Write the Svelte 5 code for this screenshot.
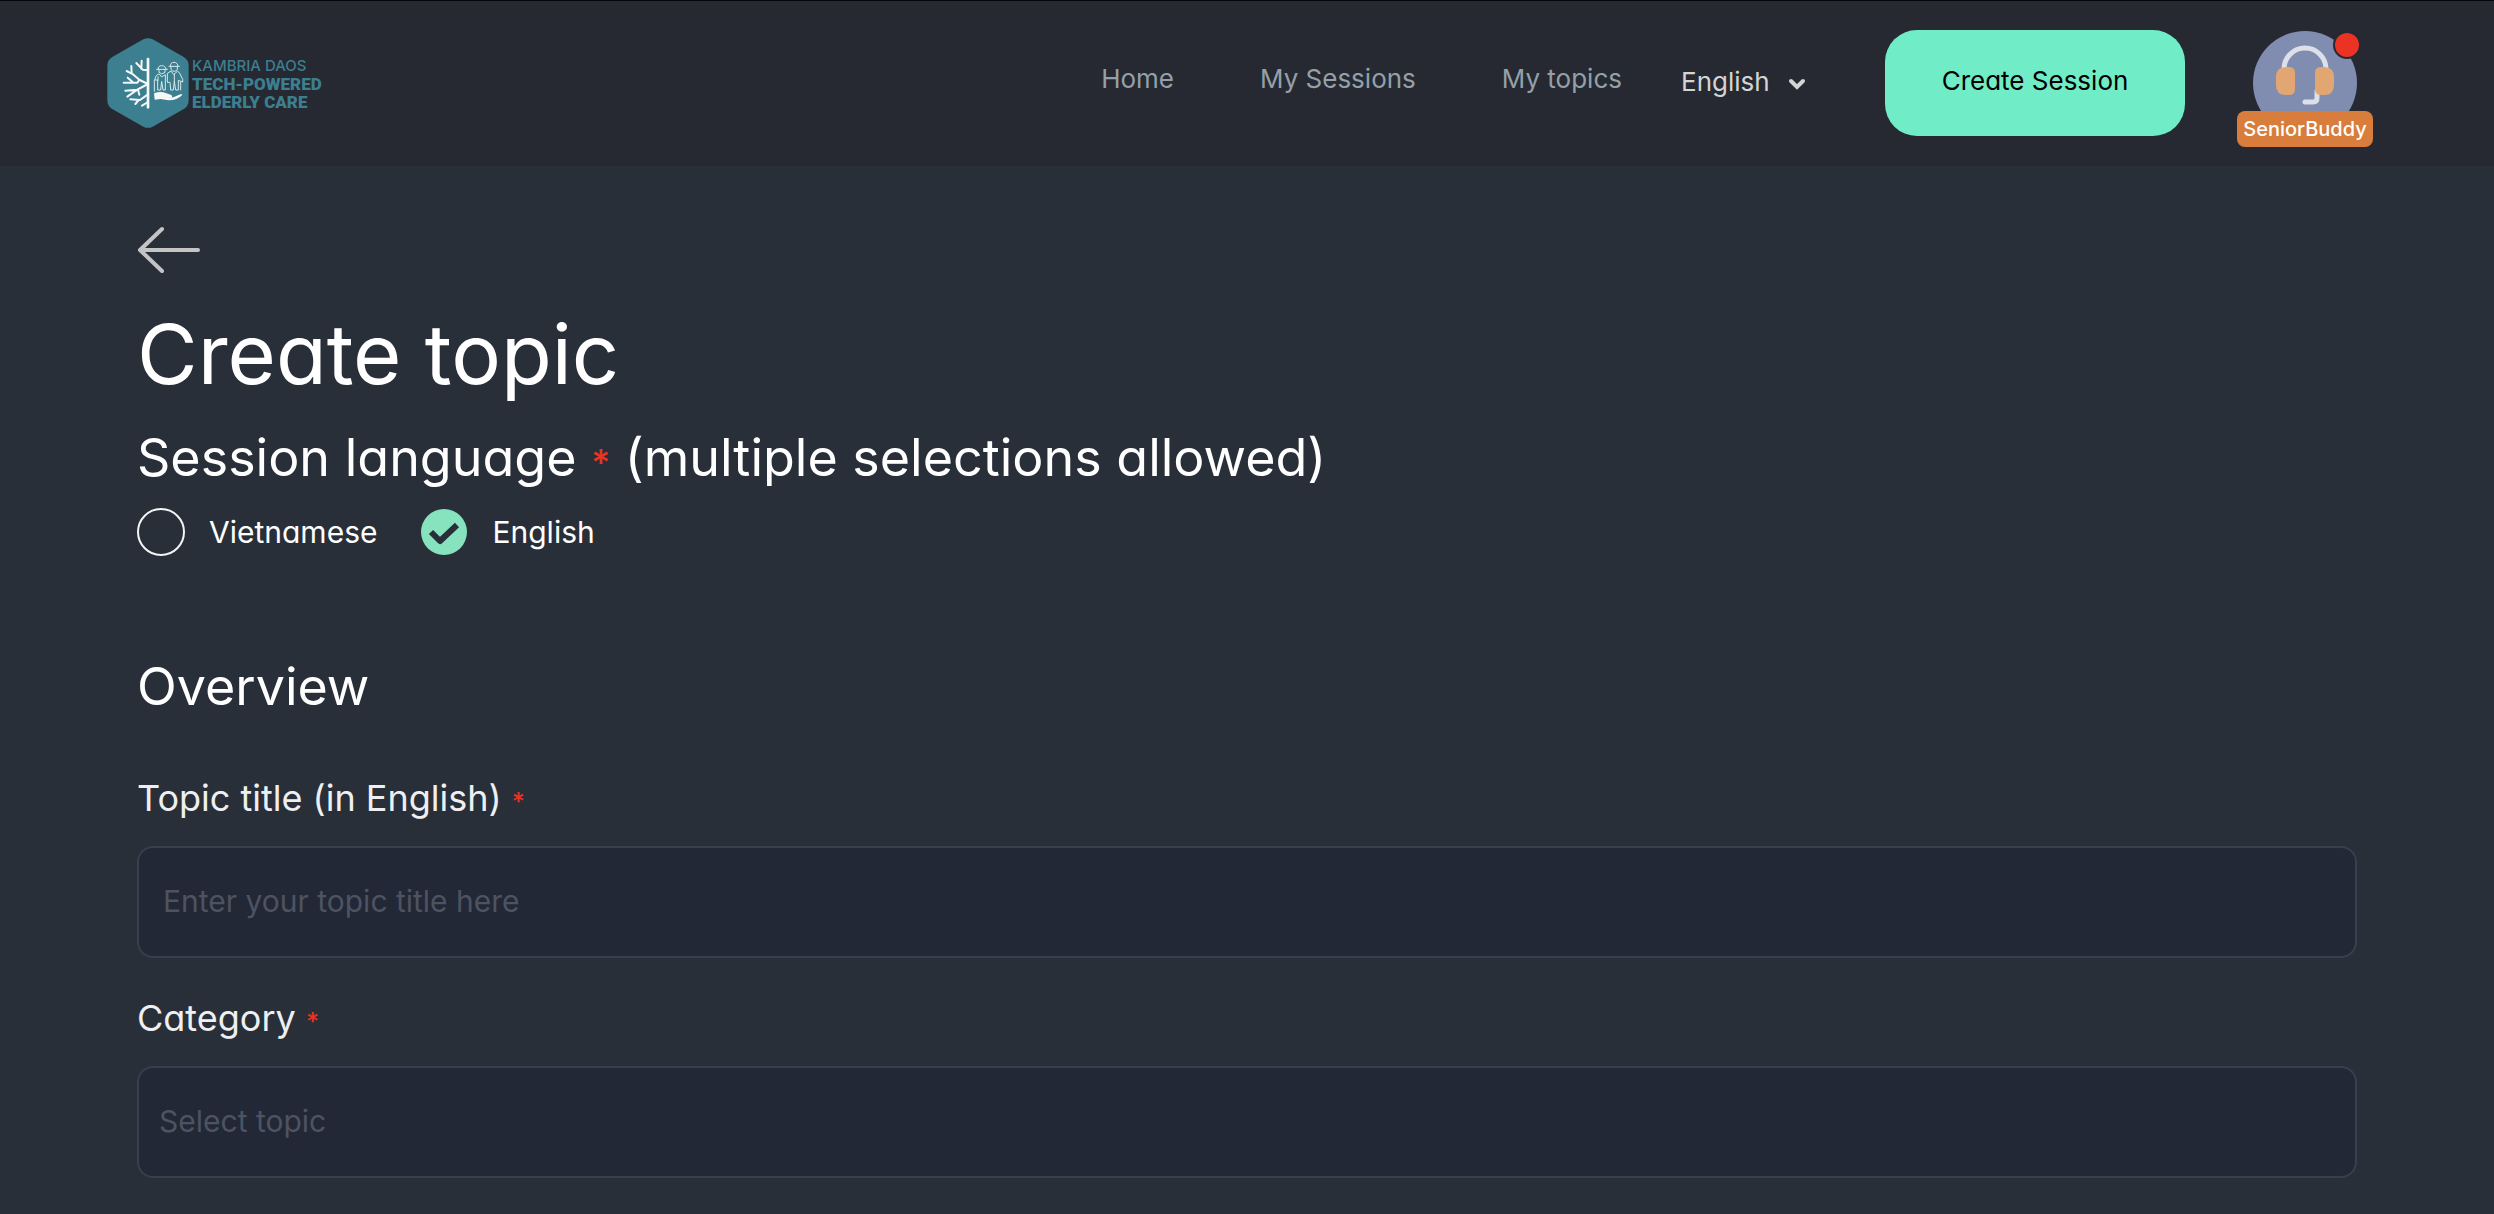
<script>
  const links = ['Home', 'My Sessions', 'My topics'];

  let languages = [
    { name: 'Vietnamese', checked: false },
    { name: 'English', checked: true }
  ];
  let locale = 'English';
  let title = '';
  let category = '';
</script>

<header class="header">
  <a class="logo" href="/">
    <svg class="logo-mark" viewBox="52 54 244 270" aria-hidden="true">
      <path
        d="M160 58Q174 51 188 58L280 110Q296 119 296 137V241Q296 259 280 268L188 320Q174 327 160 320L68 268Q52 259 52 241V137Q52 119 68 110Z"
        fill="#3c7f90"
      />
      <g fill="none" stroke="#f4f8f9" stroke-linecap="round" stroke-linejoin="round">
        <path d="M174 117V262" stroke-width="8" />
        <path
          d="M174 151L158 149L139 129M154 146L155 122M174 192L149 180L125 160L124 138M125 161L110 153M148 180L142 188L101 188M128 186L113 173M174 192L142 209L106 212M142 209L112 230M144 209L148 224M174 223L150 240L121 238M146 240L136 252M174 246L156 257"
          stroke-width="6"
        />
        <g stroke-width="3" stroke="#dbe8eb">
          <path d="M204 148Q204 137 215 137Q227 137 228 148M200 148H232M207 149V157Q215 166 225 157V149" />
          <path d="M241 139Q241 127 252 127Q263 127 264 139M237 139H268M243 141V149Q252 159 262 149V141" />
          <path d="M206 162Q195 166 195 180H203V210H212L215 184L219 210H226V164L216 170ZM193 180V214M204 170V181" />
          <path d="M242 154L232 160V187H240L242 210H250L253 184L257 210H265V181L278 186V178L268 158L262 154L252 163ZM272 186V210M253 163V184" />
        </g>
      </g>
      <path
        d="M192 220Q212 212 229 220L244 225Q250 231 242 233L226 232Q242 235 252 231L271 223Q279 221 276 226Q260 242 235 241L212 237L194 239Z"
        fill="#f4f8f9"
      />
    </svg>
    <span class="logo-text">
      <span>KAMBRIA DAOS</span>
      <strong>TECH-POWERED</strong>
      <strong>ELDERLY CARE</strong>
    </span>
  </a>

  <nav class="nav">
    {#each links as link}
      <a href="/">{link}</a>
    {/each}
  </nav>

  <div class="locale">
    <select aria-label="Site language" bind:value={locale}>
      <option>English</option>
      <option>Vietnamese</option>
    </select>
    <svg viewBox="0 0 18 12" aria-hidden="true">
      <path d="M3 3L9 9L15 3" fill="none" stroke="#d4d4d4" stroke-width="4" stroke-linecap="round" />
    </svg>
  </div>

  <button class="create" type="button">Create Session</button>

  <button class="avatar" type="button">
    <svg viewBox="0 0 104 104" aria-hidden="true">
      <circle cx="52" cy="52" r="52" fill="#808db0" />
      <path d="M31 40V38A21 21 0 0 1 73 38V40" fill="none" stroke="#dce0e9" stroke-width="5" />
      <path d="M64 60V67Q64 71 60 71H52" fill="none" stroke="#dce0e9" stroke-width="5" stroke-linecap="round" />
      <path d="M33 36H36Q42 36 42 42V58Q42 64 36 64H33Q23 64 23 54V46Q23 36 33 36Z" fill="#e2a673" />
      <path d="M71 36H68Q62 36 62 42V58Q62 64 68 64H71Q81 64 81 54V46Q81 36 71 36Z" fill="#e2a673" />
    </svg>
    <span class="dot"></span>
    <span class="badge">SeniorBuddy</span>
  </button>
</header>

<main class="main">
  <a class="back" href="/" aria-label="Back">
    <svg viewBox="0 0 64 48" aria-hidden="true">
      <path d="M25 3L3 24L25 45M3 24H61" fill="none" stroke="#c4c4c6" stroke-width="4" stroke-linecap="round" stroke-linejoin="round" />
    </svg>
  </a>

  <h1>Create topic</h1>

  <form>
    <fieldset>
      <legend>Session language <span class="required">*</span> (multiple selections allowed)</legend>
      <div class="choices">
        {#each languages as language}
          <label class="choice">
            <span class="box">
              <input type="checkbox" bind:checked={language.checked} />
              <svg viewBox="0 0 48 48" aria-hidden="true">
                <circle cx="24" cy="24" r="23" fill="#86e3bd" />
                <path d="M11 24L20 33L37 17" fill="none" stroke="#282f39" stroke-width="6" stroke-linejoin="round" />
              </svg>
            </span>
            {language.name}
          </label>
        {/each}
      </div>
    </fieldset>

    <h2>Overview</h2>

    <div class="field">
      <label for="title">Topic title (in English) <span class="required">*</span></label>
      <input id="title" type="text" placeholder="Enter your topic title here" bind:value={title} />
    </div>

    <div class="field">
      <label for="category">Category <span class="required">*</span></label>
      <select id="category" bind:value={category}>
        <option value="" disabled>Select topic</option>
      </select>
    </div>
  </form>
</main>

<style>
  :global(body) {
    margin: 0;
    background: #282f39;
    color: #fff;
    font-family: Inter, 'Liberation Sans', sans-serif;
    font-feature-settings: 'cv11';
  }

  a {
    color: inherit;
    text-decoration: none;
  }

  button,
  input,
  select {
    margin: 0;
    border: 0;
    font: inherit;
    font-feature-settings: inherit;
  }

  svg {
    display: block;
  }

  .header {
    display: flex;
    align-items: center;
    box-sizing: border-box;
    height: 166px;
    padding: 0 137px 2px 107px;
    border-top: 1px solid #05060c;
    background: #262931;
    font-size: 26px;
    line-height: 32px;
  }

  .logo {
    display: flex;
    align-items: center;
    gap: 3px;
    margin-right: auto;
    color: #3c7f90;
  }

  .logo-mark {
    width: 82px;
    height: 90px;
  }

  .logo-text {
    display: flex;
    flex-direction: column;
    padding-top: 2px;
    font-size: 15px;
    font-weight: 500;
    line-height: 18px;
  }

  .logo-text strong {
    font-family: Roboto, 'Liberation Sans', sans-serif;
    font-size: 17px;
    font-weight: 900;
  }

  .nav {
    display: flex;
    gap: 86px;
    padding-bottom: 8px;
    color: #94a0a9;
  }

  .locale {
    position: relative;
    margin: 0 79px 0 59px;
  }

  .locale select {
    display: block;
    width: 125px;
    padding: 0 0 2px;
    appearance: none;
    background: transparent;
    color: #d4d4d4;
  }

  .locale svg {
    position: absolute;
    top: 12px;
    right: 0;
    width: 18px;
    height: 12px;
    pointer-events: none;
  }

  .create {
    width: 300px;
    height: 106px;
    padding: 0 0 4px;
    border-radius: 32px;
    background: #70ecc6;
    color: #000;
  }

  .avatar {
    position: relative;
    width: 104px;
    height: 104px;
    margin-left: 68px;
    padding: 0;
    background: none;
    color: #fff;
  }

  .dot {
    position: absolute;
    top: 0;
    right: -4px;
    width: 24px;
    height: 24px;
    border: 2px solid #262931;
    border-radius: 50%;
    background: #ea3323;
  }

  .badge {
    position: absolute;
    bottom: -12px;
    left: -16px;
    width: 136px;
    border-radius: 8px;
    background: #d87d3b;
    font-size: 20px;
    font-weight: 500;
    line-height: 36px;
  }

  .main {
    padding: 60px 137px 36px;
  }

  .back {
    display: block;
    width: 64px;
  }

  h1 {
    margin: 32px 0 24px;
    font-size: 83px;
    font-weight: 400;
    line-height: 96px;
  }

  fieldset {
    margin: 0;
    padding: 0;
    border: 0;
  }

  legend,
  h2 {
    padding: 0;
    font-size: 52px;
    font-weight: 400;
    line-height: 64px;
  }

  h2 {
    margin: 99px 0 55px;
  }

  .required {
    color: #ea3323;
    font-size: 70%;
    font-weight: 500;
    line-height: 1;
  }

  .choices {
    display: flex;
    gap: 43px;
    margin-top: 18px;
    font-size: 30px;
    line-height: 40px;
  }

  .choice {
    display: flex;
    align-items: center;
    gap: 24px;
  }

  .box {
    display: grid;
  }

  .box input,
  .box svg {
    grid-area: 1 / 1;
    width: 48px;
    height: 48px;
  }

  .box input {
    box-sizing: border-box;
    border: 2px solid #f4f4f5;
    border-radius: 50%;
    appearance: none;
  }

  .box input:checked {
    border-color: transparent;
  }

  .box svg {
    visibility: hidden;
    pointer-events: none;
  }

  .box input:checked + svg {
    visibility: visible;
  }

  .field {
    display: flex;
    flex-direction: column;
    gap: 24px;
    margin-bottom: 36px;
  }

  .field label {
    color: #efeff1;
    font-size: 36px;
    line-height: 48px;
  }

  .field input,
  .field select {
    box-sizing: border-box;
    width: 100%;
    height: 112px;
    padding: 0 24px 2px;
    border: 2px solid #393f4d;
    border-radius: 16px;
    appearance: none;
    background: #222836;
    color: #4d5361;
    font-size: 30px;
  }

  .field select {
    padding: 0 20px 2px;
  }

  .field input::placeholder {
    color: #4d5361;
  }
</style>
